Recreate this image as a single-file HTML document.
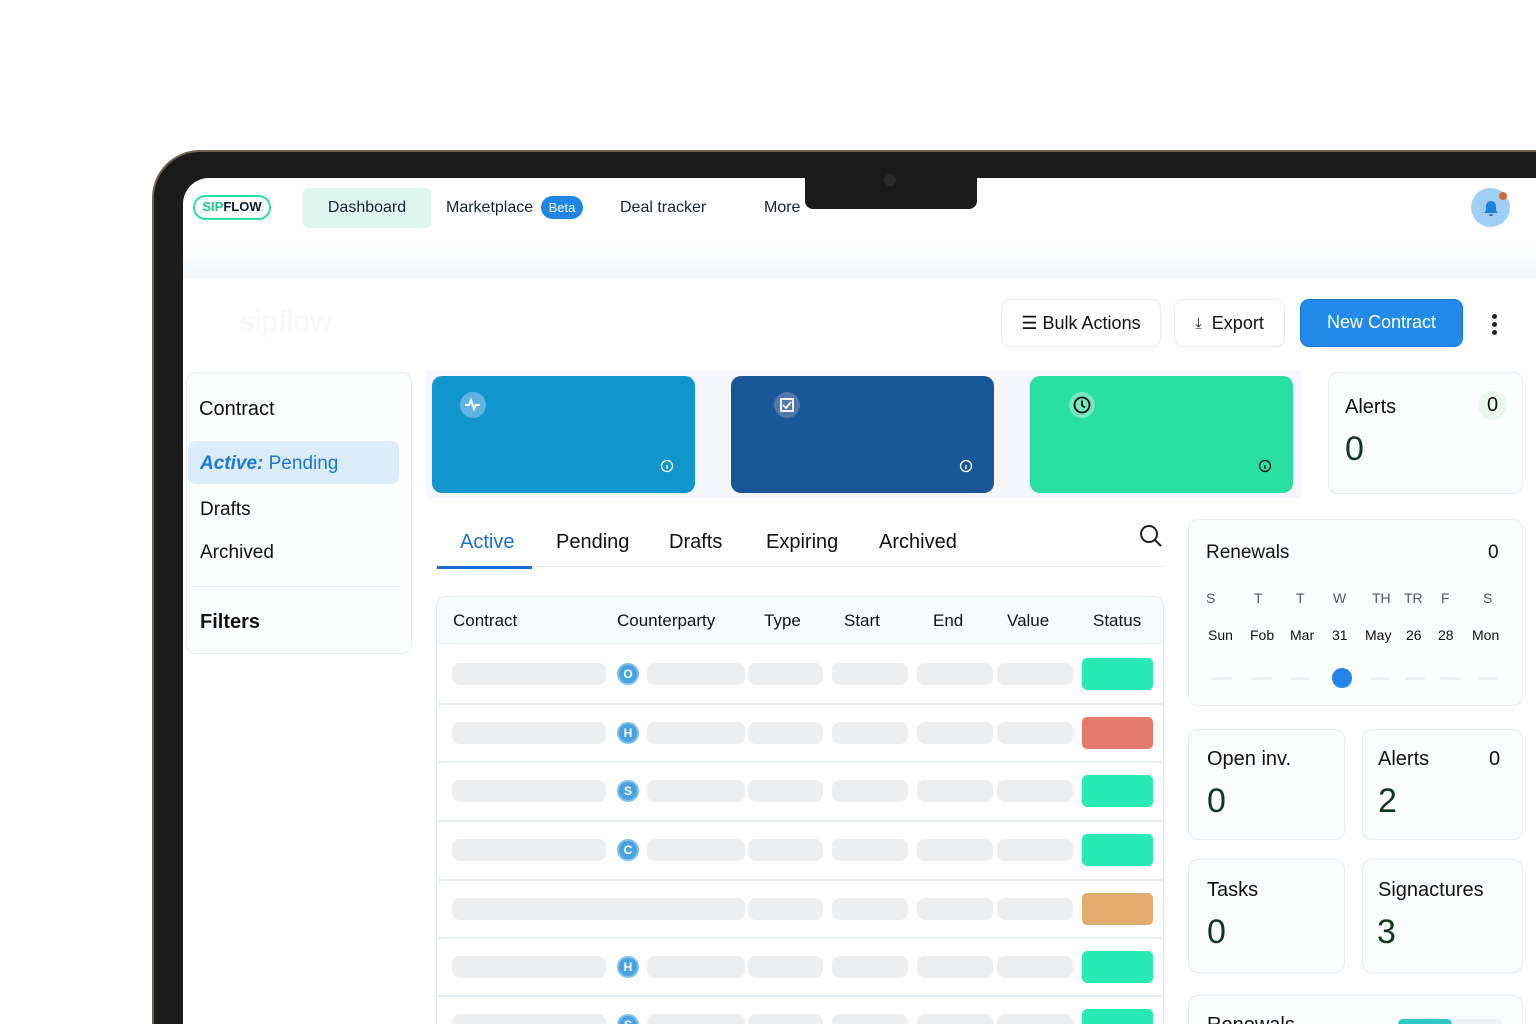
<!DOCTYPE html>
<html><head><meta charset="utf-8"><style>
*{box-sizing:border-box;margin:0;padding:0}
html,body{width:1536px;height:1024px;overflow:hidden}
body{background:#fff;font-family:"Liberation Sans",sans-serif;color:#111}
#wrap{position:relative;width:1536px;height:1024px;overflow:hidden}
.a{position:absolute}
.bezel{left:152px;top:150px;width:1500px;height:1000px;background:#1b1b1b;border-radius:48px;border:2px solid #6b6150}
.screen{left:183px;top:178px;width:1400px;height:900px;background:#fff;border-radius:26px 0 0 0}
.notch{left:805px;top:170px;width:172px;height:39px;background:#1b1b1b;border-radius:0 0 8px 8px}
.card{background:#fbfdfe;border:1.5px solid #e6eef4;border-radius:10px}
.sk{background:#eceef0;border-radius:8px;height:22px}
.av{width:22px;height:22px;border-radius:50%;background:#4aa3e0;border:2px solid #7cc0ee;color:#fff;font-size:12px;font-weight:bold;text-align:center;line-height:18px}
.st{width:71px;height:32px;border-radius:5px}
.btn{border:1.5px solid #e8eef3;border-radius:9px;background:#fff;font-size:18px;display:flex;align-items:center;justify-content:center;gap:10px}
.num{color:#0b3a1e;font-size:34px}
.lbl{font-size:20px}
.dash{top:677px;width:20px;height:3px;background:#eef1f4;border-radius:2px}
</style></head><body><div id="wrap">
<div class="a bezel"></div>
<div class="a screen"></div>
<div class="a notch"></div>
<div class="a" style="left:884px;top:174px;width:12px;height:12px;border-radius:50%;background:#2a2a2a"></div>
<div class="a" style="left:183px;top:238px;width:1353px;height:40px;background:linear-gradient(#fff,#f3f7fa)"></div>
<div class="a" style="left:193px;top:195px;width:78px;height:25px;border:2.5px solid #2fe0a6;border-radius:13px;font-size:13px;font-weight:bold;text-align:center;line-height:20px"><span style="color:#18c98f">SIP</span><span style="color:#0d1b2a">FLOW</span></div>
<div class="a" style="left:303px;top:188px;width:128px;height:40px;background:#dff6ee;border-radius:5px;font-size:16px;text-align:center;line-height:40px;color:#1a2233">Dashboard</div>
<div class="a" style="left:446px;top:199px;font-size:16px;color:#1a2233">Marketplace</div>
<div class="a" style="left:541px;top:196px;width:42px;height:23px;background:#1f86e6;border-radius:12px;color:#fff;font-size:13px;text-align:center;line-height:23px">Beta</div>
<div class="a" style="left:620px;top:199px;font-size:16px;color:#1a2233">Deal tracker</div>
<div class="a" style="left:764px;top:199px;font-size:16px;color:#1a2233">More</div>
<div class="a" style="left:1471px;top:188px;width:39px;height:39px;border-radius:50%;background:#9dd0f4"></div>
<svg class="a" style="left:1479px;top:196px" width="24" height="24" viewBox="0 0 24 24"><path d="M5 17h14l-2-2.5V10a5 5 0 0 0-10 0v4.5z" fill="#1f7ee0"/><rect x="10" y="18" width="4" height="2" rx="1" fill="#1f7ee0"/></svg>
<div class="a" style="left:1499px;top:192px;width:8px;height:8px;border-radius:50%;background:#d06a2c"></div>
<div class="a" style="left:240px;top:305px;font-size:30px;color:#f8f9fa">sipflow</div>
<div class="a btn" style="left:1001px;top:299px;width:160px;height:48px">☰ Bulk Actions</div>
<div class="a btn" style="left:1174px;top:299px;width:111px;height:48px"><span style="font-size:15px">⤓</span>Export</div>
<div class="a" style="left:1300px;top:299px;width:163px;height:48px;background:#228be9;border:1.5px solid #1a78d0;border-radius:9px;color:#fff;font-size:18px;text-align:center;line-height:45px">New Contract</div>
<div class="a" style="left:1492px;top:314px;width:5px;height:5px;border-radius:50%;background:#222;box-shadow:0 8px 0 #222,0 16px 0 #222"></div>
<div class="a card" style="left:186px;top:372px;width:226px;height:282px"></div>
<div class="a" style="left:199px;top:398px;font-size:20px">Contract</div>
<div class="a" style="left:188px;top:441px;width:211px;height:43px;background:#dcecfa;border-radius:8px"></div>
<div class="a" style="left:200px;top:453px;font-size:19px;color:#1a78d8"><i><b>Active:</b></i> Pending</div>
<div class="a" style="left:200px;top:499px;font-size:19px">Drafts</div>
<div class="a" style="left:200px;top:542px;font-size:19px">Archived</div>
<div class="a" style="left:192px;top:586px;width:208px;height:1px;background:#e6edf2"></div>
<div class="a" style="left:200px;top:611px;font-size:20px;font-weight:bold">Filters</div>
<div class="a" style="left:426px;top:370px;width:875px;height:128px;background:#f6f7fc"></div>
<div class="a" style="left:432px;top:376px;width:263px;height:117px;background:#1095cd;border-radius:10px"></div>
<div class="a" style="left:731px;top:376px;width:263px;height:117px;background:#195799;border-radius:10px"></div>
<div class="a" style="left:1030px;top:376px;width:263px;height:117px;background:#29dfa2;border-radius:10px"></div>
<svg class="a" style="left:459px;top:391px" width="28" height="28"><circle cx="14" cy="14" r="13" fill="#5fb3e6"/><path d="M6 14h4l2-5 3 9 2-4h4" stroke="#fff" stroke-width="2" fill="none"/></svg>
<svg class="a" style="left:773px;top:391px" width="28" height="28"><circle cx="14" cy="14" r="13" fill="#5278ab"/><rect x="8" y="8" width="12" height="12" fill="none" stroke="#fff" stroke-width="1.8"/><path d="M10 14l3 3 5-6" stroke="#fff" stroke-width="1.8" fill="none"/></svg>
<svg class="a" style="left:1068px;top:391px" width="28" height="28"><circle cx="14" cy="14" r="13" fill="#73e9c2"/><circle cx="14" cy="14" r="7.5" fill="none" stroke="#111" stroke-width="1.8"/><path d="M14 9.5v5l3 2" stroke="#111" stroke-width="1.8" fill="none"/></svg>
<svg class="a" style="left:660px;top:459px" width="14" height="14"><circle cx="7" cy="7" r="5.5" fill="none" stroke="#fff" stroke-width="1.3"/><path d="M7 6v4" stroke="#fff" stroke-width="1.4"/></svg>
<svg class="a" style="left:959px;top:459px" width="14" height="14"><circle cx="7" cy="7" r="5.5" fill="none" stroke="#fff" stroke-width="1.3"/><path d="M7 6v4" stroke="#fff" stroke-width="1.4"/></svg>
<svg class="a" style="left:1258px;top:459px" width="14" height="14"><circle cx="7" cy="7" r="5.5" fill="none" stroke="#111" stroke-width="1.3"/><path d="M7 6v4" stroke="#111" stroke-width="1.4"/></svg>
<div class="a card" style="left:1328px;top:372px;width:195px;height:122px"></div>
<div class="a" style="left:1345px;top:396px;font-size:20px">Alerts</div>
<div class="a" style="left:1478px;top:391px;width:29px;height:29px;border-radius:50%;background:#e9f7ef;font-size:20px;text-align:center;line-height:29px">0</div>
<div class="a num" style="left:1345px;top:430px">0</div>
<div class="a" style="left:460px;top:531px;font-size:20px;color:#1a6fd0">Active</div>
<div class="a" style="left:556px;top:531px;font-size:20px">Pending</div>
<div class="a" style="left:669px;top:531px;font-size:20px">Drafts</div>
<div class="a" style="left:766px;top:531px;font-size:20px">Expiring</div>
<div class="a" style="left:879px;top:531px;font-size:20px">Archived</div>
<div class="a" style="left:437px;top:566px;width:727px;height:1px;background:#e4eaef"></div>
<div class="a" style="left:437px;top:566px;width:95px;height:3px;background:#1a6fd0"></div>
<svg class="a" style="left:1138px;top:523px" width="26" height="26"><circle cx="11" cy="11" r="8" fill="none" stroke="#222" stroke-width="2"/><path d="M17 17l6 6" stroke="#222" stroke-width="2"/></svg>
<div class="a card" style="left:436px;top:596px;width:728px;height:450px;background:#fff"></div>
<div class="a" style="left:437px;top:597px;width:726px;height:47px;background:#f8fbfd;border-radius:10px 10px 0 0;border-bottom:1.5px solid #e6eef4"></div>
<div class="a" style="left:453px;top:611px;font-size:17px">Contract</div>
<div class="a" style="left:617px;top:611px;font-size:17px">Counterparty</div>
<div class="a" style="left:764px;top:611px;font-size:17px">Type</div>
<div class="a" style="left:844px;top:611px;font-size:17px">Start</div>
<div class="a" style="left:933px;top:611px;font-size:17px">End</div>
<div class="a" style="left:1007px;top:611px;font-size:17px">Value</div>
<div class="a" style="left:1093px;top:611px;font-size:17px">Status</div>
<div id="rows"></div>
<script>
var rows=[[674,'O','#29eab5'],[733,'H','#e47a6e'],[791,'S','#29eab5'],[850,'C','#29eab5'],[909,'','#e6ab6e'],[967,'H','#29eab5'],[1025,'S','#29eab5']];
var h='';
rows.forEach(function(r,i){var c=r[0];
if(i>0)h+='<div class="a" style="left:438px;top:'+(c-30)+'px;width:725px;height:1.5px;background:#e6eef4"></div>';
if(r[1]){h+='<div class="a sk" style="left:452px;top:'+(c-11)+'px;width:154px"></div>';
h+='<div class="a av" style="left:617px;top:'+(c-11)+'px">'+r[1]+'</div>';
h+='<div class="a sk" style="left:647px;top:'+(c-11)+'px;width:98px"></div>';}
else h+='<div class="a sk" style="left:452px;top:'+(c-11)+'px;width:293px"></div>';
[[748,75],[832,76],[917,76],[997,76]].forEach(function(s){h+='<div class="a sk" style="left:'+s[0]+'px;top:'+(c-11)+'px;width:'+s[1]+'px"></div>';});
h+='<div class="a st" style="left:1082px;top:'+(c-16)+'px;background:'+r[2]+'"></div>';});
document.getElementById('rows').innerHTML=h;
</script>
<div class="a card" style="left:1188px;top:519px;width:335px;height:187px"></div>
<div class="a" style="left:1206px;top:542px;font-size:19px">Renewals</div>
<div class="a" style="left:1488px;top:542px;font-size:19px">0</div>
<div class="a" style="left:1206px;top:590px;width:300px;font-size:14px;color:#556">
<span class="a" style="left:0">S</span><span class="a" style="left:48px">T</span><span class="a" style="left:90px">T</span><span class="a" style="left:127px">W</span><span class="a" style="left:166px">TH</span><span class="a" style="left:198px">TR</span><span class="a" style="left:235px">F</span><span class="a" style="left:277px">S</span></div>
<div class="a" style="left:1206px;top:627px;width:300px;font-size:14px">
<span class="a" style="left:2px">Sun</span><span class="a" style="left:44px">Fob</span><span class="a" style="left:84px">Mar</span><span class="a" style="left:126px">31</span><span class="a" style="left:159px">May</span><span class="a" style="left:200px">26</span><span class="a" style="left:232px">28</span><span class="a" style="left:266px">Mon</span></div>
<div class="a dash" style="left:1212px"></div><div class="a dash" style="left:1252px"></div><div class="a dash" style="left:1290px"></div><div class="a dash" style="left:1370px"></div><div class="a dash" style="left:1405px"></div><div class="a dash" style="left:1440px"></div><div class="a dash" style="left:1478px"></div>
<div class="a" style="left:1332px;top:668px;width:20px;height:20px;border-radius:50%;background:#2284e8"></div>
<div class="a card" style="left:1188px;top:729px;width:157px;height:111px"></div>
<div class="a lbl" style="left:1207px;top:748px">Open inv.</div><div class="a num" style="left:1207px;top:782px">0</div>
<div class="a card" style="left:1362px;top:729px;width:161px;height:111px"></div>
<div class="a lbl" style="left:1378px;top:748px">Alerts</div><div class="a lbl" style="left:1489px;top:748px">0</div><div class="a num" style="left:1378px;top:782px">2</div>
<div class="a card" style="left:1188px;top:859px;width:157px;height:114px"></div>
<div class="a lbl" style="left:1207px;top:879px">Tasks</div><div class="a num" style="left:1207px;top:913px">0</div>
<div class="a card" style="left:1362px;top:859px;width:161px;height:114px"></div>
<div class="a lbl" style="left:1378px;top:879px">Signactures</div><div class="a num" style="left:1377px;top:913px">3</div>
<div class="a card" style="left:1188px;top:995px;width:335px;height:60px"></div>
<div class="a lbl" style="left:1207px;top:1014px">Renewals</div>
<div class="a" style="left:1398px;top:1019px;width:54px;height:10px;background:#2ec7c5;border-radius:6px"></div>
<div class="a" style="left:1452px;top:1019px;width:50px;height:10px;background:#eef2f5;border-radius:6px"></div>
</div></body></html>
